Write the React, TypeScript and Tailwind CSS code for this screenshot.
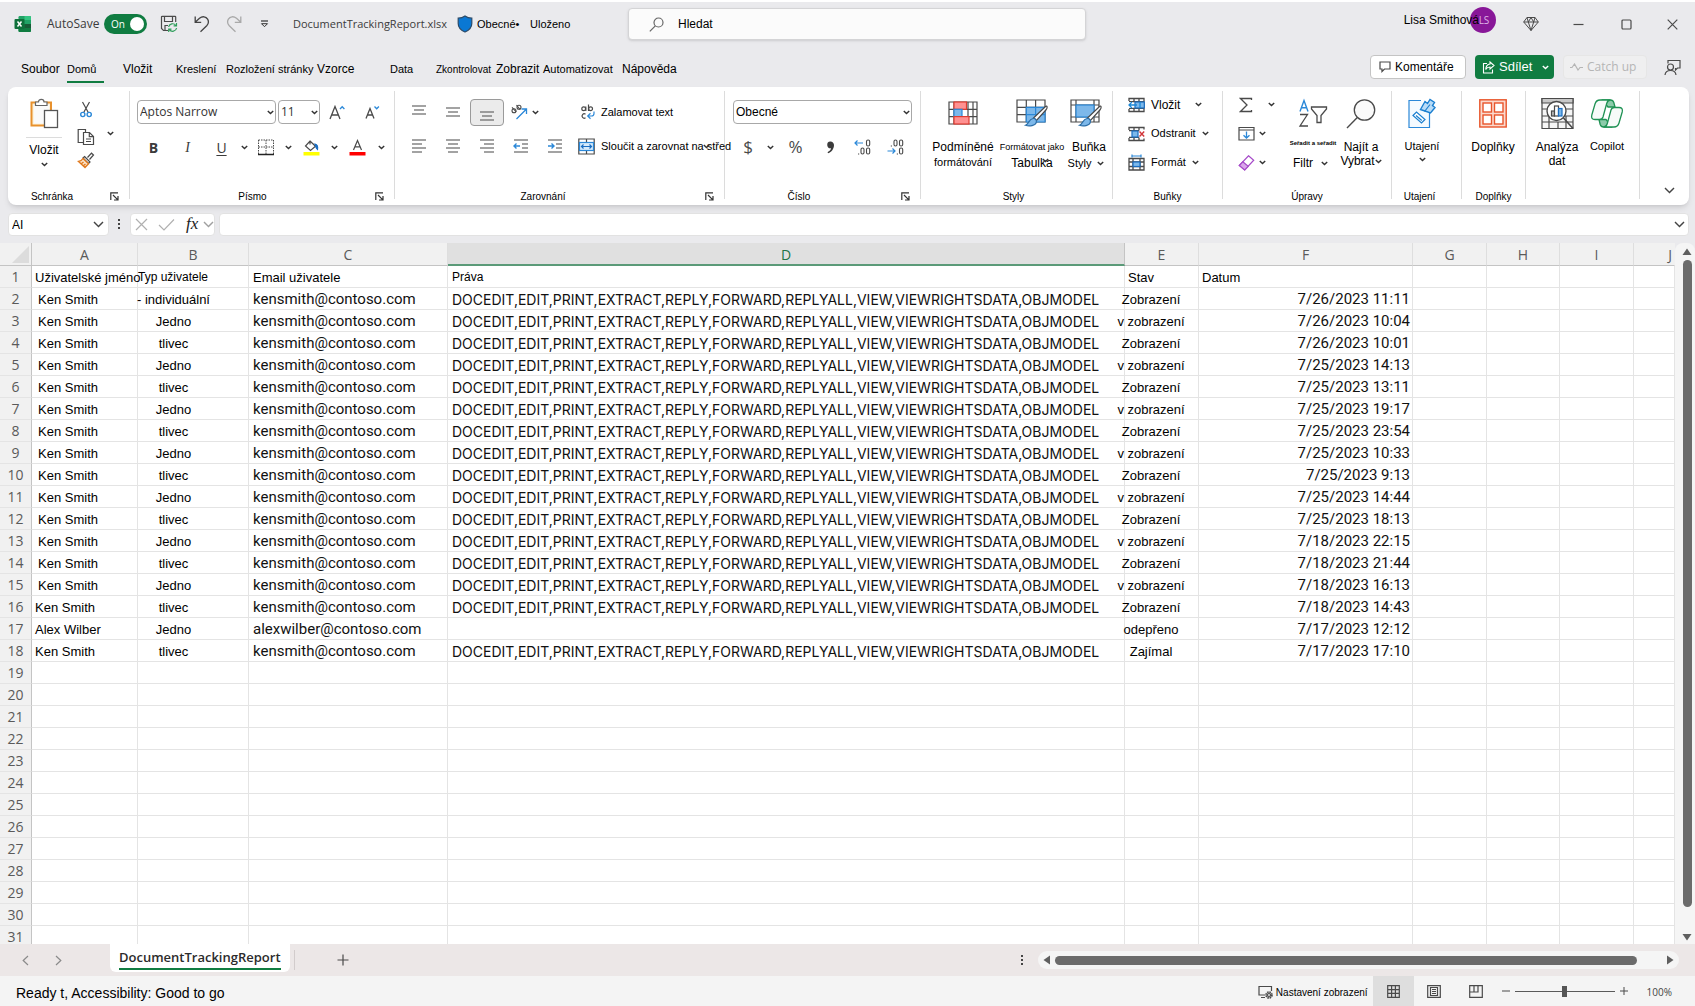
import React, { useState } from 'react';
import clsx from 'clsx';

type Row = {
  name: string;
  type: string;
  email: string;
  rights: boolean;
  status: string;
  date: string;
};

const RIGHTS = 'DOCEDIT,EDIT,PRINT,EXTRACT,REPLY,FORWARD,REPLYALL,VIEW,VIEWRIGHTSDATA,OBJMODEL';

const ken = (type: string, status: string, date: string): Row => ({
  name: 'Ken Smith',
  type,
  email: 'kensmith@contoso.com',
  rights: true,
  status,
  date,
});

const ROWS: Row[] = [
  ken('- individuální', 'Zobrazení', '7/26/2023 11:11'),
  ken('Jedno', 'v zobrazení', '7/26/2023 10:04'),
  ken('tlivec', 'Zobrazení', '7/26/2023 10:01'),
  ken('Jedno', 'v zobrazení', '7/25/2023 14:13'),
  ken('tlivec', 'Zobrazení', '7/25/2023 13:11'),
  ken('Jedno', 'v zobrazení', '7/25/2023 19:17'),
  ken('tlivec', 'Zobrazení', '7/25/2023 23:54'),
  ken('Jedno', 'v zobrazení', '7/25/2023 10:33'),
  ken('tlivec', 'Zobrazení', '7/25/2023 9:13'),
  ken('Jedno', 'v zobrazení', '7/25/2023 14:44'),
  ken('tlivec', 'Zobrazení', '7/25/2023 18:13'),
  ken('Jedno', 'v zobrazení', '7/18/2023 22:15'),
  ken('tlivec', 'Zobrazení', '7/18/2023 21:44'),
  ken('Jedno', 'v zobrazení', '7/18/2023 16:13'),
  ken('tlivec', 'Zobrazení', '7/18/2023 14:43'),
  {
    name: 'Alex Wilber',
    type: 'Jedno',
    email: 'alexwilber@contoso.com',
    rights: false,
    status: 'odepřeno',
    date: '7/17/2023 12:12',
  },
  ken('tlivec', 'Zajímal', '7/17/2023 17:10'),
];

const TABS = [
  { label: 'Soubor', className: 'w-[46px] text-[12px]' },
  { label: 'Domů', className: 'w-[56px] text-[11px]' },
  { label: 'Vložit', className: 'w-[53px] text-[12px]' },
  { label: 'Kreslení', className: 'w-[50px] text-[11px]' },
  { label: 'Rozložení stránky', className: 'w-[91px] text-[11px]' },
  { label: 'Vzorce', className: 'w-[73px] text-[12px]' },
  { label: 'Data', className: 'w-[46px] text-[11px]' },
  { label: 'Zkontrolovat', className: 'w-[60px] text-[10px]' },
  { label: 'Zobrazit', className: 'w-[47px] text-[12px]' },
  { label: 'Automatizovat', className: 'w-[79px] text-[11px]' },
  { label: 'Nápověda', className: 'text-[12px]' },
];

/* ---------- small drawing helpers ---------- */

const Svg: React.FC<{ w: number; h: number; box?: string; className?: string; children: React.ReactNode }> = ({
  w,
  h,
  box,
  className,
  children,
}) => (
  <svg
    width={w}
    height={h}
    viewBox={box ?? `0 0 ${w} ${h}`}
    fill="none"
    stroke="#4a4a4a"
    strokeWidth="1.2"
    className={clsx('shrink-0', className)}
    aria-hidden="true"
  >
    {children}
  </svg>
);

const Chevron: React.FC<{ className?: string; color?: string }> = ({ className, color = '#333' }) => (
  <Svg w={7} h={5} className={className}>
    <path d="M0.8 0.9 3.5 3.6 6.2 0.9" stroke={color} strokeWidth="1.4" />
  </Svg>
);

const BigChevron: React.FC<{ color?: string }> = ({ color = '#444' }) => (
  <Svg w={11} h={7}>
    <path d="M1 1 5.5 5.6 10 1" stroke={color} strokeWidth="1.4" />
  </Svg>
);

const Lines: React.FC<{ rows: [number, number, number][]; children?: React.ReactNode }> = ({ rows, children }) => (
  <Svg w={16} h={16}>
    {rows.map(([x1, x2, y]) => (
      <path key={y} d={`M${x1} ${y}H${x2}`} stroke="#666" />
    ))}
    {children}
  </Svg>
);

const ExcelIcon = () => (
  <Svg w={18} h={18}>
    <g stroke="none">
      <rect x="4.5" y="1" width="12.5" height="16" rx="1.2" fill="#21a366" />
      <path d="M4.5 9H17V15.8a1.2 1.2 0 0 1-1.2 1.2H5.7a1.2 1.2 0 0 1-1.2-1.2z" fill="#107c41" />
      <path d="M10.5 1H15.8A1.2 1.2 0 0 1 17 2.2V5H10.5z" fill="#33c481" />
      <path d="M10.5 9H17v4H10.5z" fill="#185c37" />
      <rect x="0.5" y="4" width="10" height="10" rx="1" fill="#0f703b" />
    </g>
    <path d="M3.5 6.5 7.5 11.5M7.5 6.5 3.5 11.5" stroke="#fff" strokeWidth="1.5" />
  </Svg>
);

const SaveIcon = () => (
  <Svg w={18} h={18}>
    <path d="M8 15.5H3.5L1.5 13.5V2A0.7 0.7 0 0 1 2.2 1.3H15A0.7 0.7 0 0 1 15.7 2V7M4.5 1.5V6.5H12.5V1.5M5 15.3V10.5H8" />
    <path d="M8.6 12A4 4 0 0 1 15.8 10.5M16.5 8V10.9H13.6M16.6 13A4 4 0 0 1 9.4 14.6M8.7 17V14.2H11.5" stroke="#2f9e5b" />
  </Svg>
);

const UndoIcon: React.FC<{ flip?: boolean }> = ({ flip }) => (
  <Svg w={16} h={18} className={flip ? '-scale-x-100' : ''}>
    <path
      d="M1.2 1.5V7.3H7.2M1.4 7 5.5 3.3C8.5 0.8 12 1.5 13.6 4.2 15 6.6 14.3 9 12.7 10.7L6.5 16.7"
      stroke={flip ? '#a9a9a9' : '#444'}
      strokeWidth="1.3"
    />
  </Svg>
);

const ShieldIcon = () => (
  <Svg w={16} h={18}>
    <path
      d="M8 1C10 2.6 12.2 3.2 14.8 3.2V8.5C14.8 12.5 12 15.3 8 17 4 15.3 1.2 12.5 1.2 8.5V3.2C3.8 3.2 6 2.6 8 1Z"
      fill="#0a78d4"
      stroke="#2b4a68"
    />
  </Svg>
);

const DiamondIcon = () => (
  <Svg w={16} h={16}>
    <path d="M4 1.5H12L15.3 6 8 14.5 0.7 6ZM0.7 6H15.3M5.3 6 8 14.5 10.7 6 8 1.5ZM4 1.5 5.3 6M12 1.5 10.7 6" strokeWidth="1" />
  </Svg>
);

const PasteIcon = () => (
  <Svg w={30} h={32}>
    <rect x="2.5" y="5.5" width="19.5" height="23" stroke="#e8912d" strokeWidth="2" fill="#fdf3dc" />
    <rect x="5" y="8" width="15" height="18.5" fill="#fafafa" stroke="none" />
    <path d="M6.5 8.5V5H9.5C9.5 1.5 15 1.5 15 5H18V8.5Z" fill="#fff" stroke="#666" />
    <rect x="15.5" y="13.5" width="13" height="17" fill="#fff" stroke="#555" strokeWidth="1.3" />
  </Svg>
);

const CutIcon = () => (
  <Svg w={14} h={17}>
    <path d="M3.5 1 9.3 11.5M10.5 1 4.7 11.5" />
    <circle cx="3.8" cy="13.5" r="2.1" stroke="#2b88d8" strokeWidth="1.4" />
    <circle cx="10.2" cy="13.5" r="2.1" stroke="#2b88d8" strokeWidth="1.4" />
  </Svg>
);

const CopyIcon = () => (
  <Svg w={18} h={18}>
    <path d="M6 14.5H1.2V1.5H8.5V4" />
    <path d="M6.5 4.5H12.5L16.5 8.5V16.5H6.5ZM12.3 4.7V8.7H16.3M9 11H14M9 13.5H14" fill="#fff" />
  </Svg>
);

const PainterIcon = () => (
  <Svg w={18} h={17}>
    <path d="M10.5 5.5 14.5 1.2 16.5 3 12.5 7.5" fill="#fff" />
    <path d="M7.5 4.5 13 10 11.5 11.5 6 6Z" fill="#fff" />
    <path d="M6 6.5 11.5 11.8 8 15.5 1.5 9.5Q4.5 9 6 6.5ZM4 12 6.5 10M6 14 8.5 12" stroke="#e07a1f" fill="#fbe3c8" strokeWidth="1.4" />
  </Svg>
);

const BordersIcon = () => (
  <Svg w={16} h={17}>
    <path d="M0.5 1H15.5M0.5 1V15M15.5 1V15M8 1V15M0.5 8H15.5" strokeDasharray="1.5 1" strokeWidth="1" />
    <path d="M0 15.5H16" stroke="#222" strokeWidth="1.5" />
  </Svg>
);

const FillIcon = () => (
  <Svg w={17} h={17}>
    <path d="M7 2 12.5 7.3 7.5 11.5 2.5 7Z M7 2V5.5" />
    <path d="M12 5C14.8 5.5 15 7.5 14.5 10.5 13 9.5 12.7 8 12 5Z" fill="#1b6ec2" stroke="#1b6ec2" />
    <rect x="0.5" y="13" width="16" height="3.5" fill="#ffff00" stroke="none" />
  </Svg>
);

const LauncherIcon = () => (
  <Svg w={9} h={9}>
    <path d="M0.8 8V0.8H8M3 3 7.6 7.6M8 4V8H4" stroke="#333" />
  </Svg>
);

const OrientationIcon = () => (
  <Svg w={18} h={16}>
    <circle cx="4" cy="6.7" r="2" strokeWidth="1.1" />
    <path d="M2 3.3 6.3 7.8M6.5 1 10 5.5" strokeWidth="1.1" />
    <circle cx="9" cy="3.2" r="2" strokeWidth="1.1" />
    <path d="M6.5 15 16 5.5M11.5 5H16.5V10" stroke="#2b88d8" strokeWidth="1.3" />
  </Svg>
);

const WrapIcon = () => (
  <Svg w={16} h={16}>
    <circle cx="3.7" cy="4.8" r="1.9" />
    <path d="M5.8 2.5V7M8.5 0.5V7" />
    <circle cx="10.6" cy="4.8" r="1.9" />
    <path d="M5.5 10.2A2.2 2.2 0 1 0 5.5 13.8" />
    <path d="M14 7.5V9.5Q14 12 11.5 12H8M10.5 9.3 7.7 12 10.5 14.7" stroke="#2b88d8" />
  </Svg>
);

const MergeIcon = () => (
  <Svg w={17} h={17}>
    <path d="M0.8 1H16.2V16H0.8ZM8.5 1V4M8.5 13V16" />
    <rect x="1.5" y="4.5" width="14" height="8" fill="#d6ebfb" stroke="#2b88d8" />
    <path d="M3.5 8.5H13.5M5.5 6.5 3.5 8.5 5.5 10.5M11.5 6.5 13.5 8.5 11.5 10.5" stroke="#1b6ec2" />
  </Svg>
);

const DecimalIcon: React.FC<{ less?: boolean }> = ({ less }) => (
  <Svg w={18} h={18}>
    {less ? (
      <path d="M0.5 13H8M5.5 10.5 8 13 5.5 15.5" stroke="#2b88d8" />
    ) : (
      <path d="M9 5H1M3.5 2.5 1 5 3.5 7.5" stroke="#2b88d8" />
    )}
    <g strokeWidth="1.1">
      {less && <rect x="7" y="2" width="3" height="6" rx="1.5" />}
      <rect x="12.5" y="2" width="3.2" height="6" rx="1.5" />
      {!less && <rect x="7" y="10" width="3" height="6" rx="1.5" />}
      <rect x="12.5" y="10" width="3.2" height="6" rx="1.5" />
      <path d={less ? 'M3.8 8H5M9.8 16H11' : 'M4 16H5.2'} />
    </g>
  </Svg>
);

const CondFormatIcon = () => (
  <Svg w={30} h={26}>
    <path d="M1 2H29V24H1ZM1 9.3H29M1 16.6H29M6 2V24M20 2V24M25 2V24" />
    <rect x="6" y="2" width="12.5" height="7.3" fill="#ff9191" stroke="#e03c31" />
    <rect x="6" y="9.3" width="8" height="7.3" fill="#7db8ea" stroke="#2b88d8" />
    <rect x="6" y="16.6" width="15" height="7.4" fill="#ff9191" stroke="#e03c31" />
  </Svg>
);

const Brush = () => (
  <>
    <path d="M29.5 8.5C31.5 7 31.5 10 30.3 11.5L20.5 22.5 17.5 20Z" fill="#fff" />
    <path d="M17 20.5C19 20 21 22 20.3 24.3 19.5 27.5 13.5 28.8 9.5 27.3 13 26 12.5 21.5 17 20.5Z" fill="#7db8ea" stroke="#2b6ea8" />
  </>
);

const TableFormatIcon = () => (
  <Svg w={32} h={30}>
    <path d="M1 2H29V24H1ZM1 9.3H29M1 16.6H29M10.3 2V24M19.6 2V24" fill="#fff" />
    <path d="M10.3 9.3H29V24H10.3Z" fill="#7db8ea" stroke="#2b88d8" />
    <path d="M10.3 16.6H29M19.6 9.3V24" stroke="#2b88d8" />
    <Brush />
  </Svg>
);

const CellStylesIcon = () => (
  <Svg w={32} h={30}>
    <path d="M1 2H29V24H1ZM1 7H29M1 19H29M6 2V24M24 2V24" fill="#fff" />
    <rect x="6" y="7" width="18" height="12" fill="#7db8ea" stroke="#2b88d8" />
    <Brush />
  </Svg>
);

const CellsInsertIcon = () => (
  <Svg w={17} h={16}>
    <path d="M1 4V1.5H16V14.5H1V12M6 1.5V14.5M11 1.5V14.5M1 4.7H16M1 11.3H16" strokeWidth="1.3" />
    <rect x="0" y="5.4" width="7" height="5.2" fill="#fff" stroke="none" />
    <rect x="7" y="5" width="9.3" height="6" fill="#7db8ea" stroke="#1b6ec2" />
    <path d="M12 5V11M9 8H1M4 5 1 8 4 11" stroke="#1b88d8" strokeWidth="1.3" />
  </Svg>
);

const CellsDeleteIcon = () => (
  <Svg w={17} h={16}>
    <path d="M1 4V1.5H16V3.5M1 12V14.5H16V12.5M6 1.5V4.5M11 1.5V4.5M6 11.5V14.5M11 11.5V14.5M1 4.7H11M1 11.3H11" strokeWidth="1.3" />
    <rect x="4" y="5" width="6" height="6" fill="#7db8ea" stroke="#1b6ec2" />
    <path d="M11.5 5.5 16.2 10.5M16.2 5.5 11.5 10.5" stroke="#d13438" strokeWidth="1.4" />
  </Svg>
);

const CellsFormatIcon = () => (
  <Svg w={17} h={17}>
    <path d="M4 2H13M4 0.5V3.5M13 0.5V3.5" stroke="#2b88d8" />
    <path d="M1 4.5H16V16H1ZM1 8H16M1 12.5H16M5 4.5V16M12 4.5V16" strokeWidth="1.3" />
    <rect x="5" y="8" width="7" height="4.5" fill="#7db8ea" stroke="#1b6ec2" />
  </Svg>
);

const SigmaIcon = () => (
  <Svg w={14} h={16}>
    <path d="M12.5 3V1.5H1.5L8 8 1.5 14.5H12.5V13" strokeWidth="1.3" />
  </Svg>
);

const FillDownIcon = () => (
  <Svg w={17} h={15}>
    <path d="M1 1.5H16V14H1ZM1 4H16" fill="#fff" />
    <path d="M8.5 5.5V12M5.5 9.2 8.5 12 11.5 9.2" stroke="#2b88d8" strokeWidth="1.3" />
  </Svg>
);

const EraserIcon = () => (
  <Svg w={17} h={16}>
    <path d="M10.5 0.8 15.7 5.2 6.7 15 1.3 10.5Z" fill="#fff" stroke="#a64ac9" />
    <path d="M4.8 6.8 10.2 11.3 6.7 15 1.3 10.5Z" fill="#d9a6ea" stroke="#a64ac9" />
  </Svg>
);

const SortFilterIcon = () => (
  <Svg w={30} h={30}>
    <path d="M2 13.5 6 2.5 10 13.5M3.5 9.7H8.5" stroke="#2b88d8" strokeWidth="1.4" />
    <path d="M2 16.5H9.5L2 28H10" strokeWidth="1.3" />
    <path d="M13.5 9H28.5V11L23 17.5V24.5H19V17.5L13.5 11Z" strokeWidth="1.3" />
  </Svg>
);

const FindIcon = () => (
  <Svg w={30} h={31}>
    <circle cx="18.5" cy="12" r="10.2" strokeWidth="1.3" fill="#fafafa" />
    <path d="M11.3 19.5 1 30" strokeWidth="1.4" />
  </Svg>
);

const SensitivityIcon = () => (
  <Svg w={28} h={31}>
    <path d="M13 2.5H1V29.5H21.5V14" stroke="#2b88d8" fill="#f4faff" />
    <path d="M5 17.5 8.5 14 17 21.5 13.5 25Z" fill="#fff" stroke="#1b7fd0" />
    <path d="M8 17.5 13.8 22.5" stroke="#1b7fd0" />
    <path d="M12.5 11.5 17 3.5 19.5 5.5 22 1.5 26.5 4.5 24.5 7.5 27 9.5 22.5 15Z" fill="#b9dcf7" stroke="#1b7fd0" strokeWidth="1.4" />
    <path d="M16.500 13.500 22 6.500" stroke="#1b7fd0" />
  </Svg>
);

const AddinsIcon = () => (
  <Svg w={28} h={29}>
    <g stroke="#e8542b" strokeWidth="1.4">
      <rect x="0.8" y="0.8" width="26.4" height="27.2" fill="#fbd9cd" />
      <rect x="4" y="4" width="8.5" height="9" fill="#fff" />
      <rect x="15.5" y="4" width="8.5" height="9" fill="#fff" />
      <rect x="4" y="16" width="8.5" height="9" fill="#fff" />
      <rect x="15.5" y="16" width="8.5" height="9" fill="#fff" />
    </g>
  </Svg>
);

const AnalyzeIcon = () => (
  <Svg w={33} h={33}>
    <path d="M1 1.5H32V31.5H1ZM1 12H32M1 19H32M1 25H32M8 19V31.5M17 25V31.5M25 19V31.5" fill="#f6f6f6" />
    <path d="M1 1.5H32V6H1Z" fill="#c8c8c8" />
    <circle cx="15.5" cy="14" r="9.5" fill="#fff" strokeWidth="1.4" />
    <path d="M22.5 21 32 31.5" strokeWidth="1.6" />
    <rect x="10.5" y="14" width="3" height="5" fill="#bbb" />
    <rect x="13.5" y="9" width="4" height="10" fill="#fff" />
    <rect x="17.5" y="11.5" width="3.5" height="7.5" fill="#7db8ea" stroke="#1b6ec2" />
  </Svg>
);

const CopilotIcon = () => (
  <Svg w={34} h={31}>
    <g stroke="#1f9254" strokeWidth="1.3" strokeLinejoin="round">
      <path d="M12 2H20.5Q23 2 23.8 4.5L25 9H18Z" fill="#8ccbaa" />
      <path d="M22 29H13.5Q11 29 10.2 26.5L9 21.5H16Z" fill="#8ccbaa" />
      <path d="M12.5 2H20Q17.5 2.5 16.7 5.5L13 19Q12.2 21.5 9.5 21.5H5Q0.7 21.5 1.8 17L5 6Q6.2 2 10 2Z" fill="#f7fbf9" />
      <path d="M21.5 29H14Q16.5 28.5 17.3 25.5L21 12Q21.8 9.5 24.5 9.5H29Q33.3 9.5 32.2 14L29 25Q27.8 29 24 29Z" fill="#f7fbf9" />
    </g>
  </Svg>
);

/* ---------- title bar ---------- */

const TitleBar = () => (
  <header className="flex h-[44px] items-center">
    <div className="flex w-[628px] shrink-0 items-center pl-[14px]">
      <ExcelIcon />
      <label htmlFor="autosave" className="ml-[15px] w-[57px] font-['Open_Sans',sans-serif] text-[12px] text-[#3b3b3b]">
        AutoSave
      </label>
      <span className="relative flex h-[20px] w-[43px] items-center rounded-full bg-[#107c41]">
        <input id="autosave" type="checkbox" defaultChecked className="absolute inset-0 appearance-none" />
        <span className="pointer-events-none ml-[7px] font-['Open_Sans',sans-serif] text-[10px] text-white">On</span>
        <span className="pointer-events-none mr-[3px] ml-auto size-[14px] rounded-full bg-white" />
      </span>
      <div className="ml-[13px] flex items-center gap-[16px]">
        <button aria-label="Uložit"><SaveIcon /></button>
        <button aria-label="Zpět"><UndoIcon /></button>
        <button aria-label="Znovu"><UndoIcon flip /></button>
        <button aria-label="Přizpůsobit panel" className="pl-[2px]">
          <Svg w={9} h={8}>
            <path d="M1 1H8" stroke="#333" />
            <path d="M1.5 3.7H7.5L4.5 6.7Z" stroke="#333" strokeWidth="1" />
          </Svg>
        </button>
      </div>
      <span className="ml-[24px] w-[164px] font-['Open_Sans',sans-serif] text-[11px] text-[#3b3b3b]">
        DocumentTrackingReport.xlsx
      </span>
      <ShieldIcon />
      <span className="ml-[4px] w-[53px] text-[11px]">Obecné•</span>
      <span className="text-[11px]">Uloženo</span>
    </div>

    <label className="flex h-[32px] max-w-[458px] flex-1 items-center gap-[14px] rounded border border-[#d4d4d6] bg-[#fbfbfb] pl-[20px] shadow-sm">
      <Svg w={15} h={15}>
        <circle cx="9.5" cy="5.5" r="4.5" stroke="#666" />
        <path d="M6.3 8.8 0.8 14.3" stroke="#666" />
      </Svg>
      <input aria-label="Hledat" placeholder="Hledat" className="min-w-0 flex-1 bg-transparent text-[12px] outline-none placeholder:text-black" />
    </label>

    <div className="ml-auto flex items-center">
      <div className="mr-[12px] flex items-center pb-[8px]">
        <span className="relative z-10 text-[12px] whitespace-nowrap">Lisa Smithová</span>
        <span className="-ml-[9px] flex size-[26px] items-center justify-center rounded-full bg-[#881798] pl-[2px] font-['Open_Sans',sans-serif] text-[10px] text-[#dfb3e6]">
          LS
        </span>
      </div>
      <button aria-label="Premium" className="flex w-[46px] justify-center"><DiamondIcon /></button>
      <button aria-label="Minimalizovat" className="flex w-[48px] justify-center">
        <Svg w={11} h={11}><path d="M0.5 5.5H10.5" /></Svg>
      </button>
      <button aria-label="Maximalizovat" className="flex w-[48px] justify-center">
        <Svg w={11} h={11}><rect x="1" y="1" width="9" height="9" rx="1" /></Svg>
      </button>
      <button aria-label="Zavřít" className="flex w-[45px] justify-center">
        <Svg w={11} h={11}><path d="M0.7 0.7 10.3 10.3M10.3 0.7 0.7 10.3" /></Svg>
      </button>
    </div>
  </header>
);

const TabRow = () => {
  const [active, setActive] = useState('Domů');
  return (
    <div className="flex h-[41px] items-center justify-between pr-[14px] pl-[21px]">
      <nav className="flex self-end pb-[4px]">
        {TABS.map((tab) => (
          <button
            key={tab.label}
            onClick={() => setActive(tab.label)}
            className={clsx('h-[28px] text-left whitespace-nowrap', tab.className)}
          >
            <span
              className={clsx(
                'flex h-[28px] items-center border-b-2 pt-[2px]',
                tab.label === active ? 'w-[37px] border-[#107c41]' : 'border-transparent'
              )}
            >
              {tab.label}
            </span>
          </button>
        ))}
      </nav>
      <div className="flex items-center gap-[9px] pt-[1px]">
        <button className="flex h-[24px] w-[96px] items-center gap-[4px] rounded border border-[#c4c4c4] bg-white pl-[8px] text-[12px]">
          <Svg w={12} h={12}>
            <path d="M1 1H11V8H5.5L3 10.5V8H1Z" />
          </Svg>
          Komentáře
        </button>
        <button className="flex h-[24px] w-[79px] items-center gap-[4px] rounded bg-[#107c41] pl-[7px] text-[13px] text-white">
          <Svg w={13} h={13}>
            <path d="M5 2.5H1.5V12H10.5V8.5M8 1 12 4.5 8 8V6Q5 6 3.7 8.5 4 3.5 8 3Z" stroke="#fff" strokeWidth="1.1" />
          </Svg>
          Sdílet
          <Chevron color="#fff" className="ml-[6px]" />
        </button>
        <button className="flex h-[24px] w-[84px] items-center gap-[4px] rounded border border-[#e6e6e6] bg-[#efeff0] pl-[6px] font-['Open_Sans',sans-serif] text-[12px] text-[#b5b5b5]">
          <Svg w={13} h={8}>
            <path d="M0 4.5H2L4.5 1 8 7 10 4.5H13" stroke="#b5b5b5" />
          </Svg>
          Catch up
        </button>
        <button aria-label="Prezentovat" className="pl-[8px]">
          <Svg w={17} h={17}>
            <path d="M4 4.5V1.5H16V9H13.5L11.5 11V9" />
            <circle cx="6.5" cy="8" r="3" />
            <path d="M1 16Q1.5 11.5 6.5 11.5 11.5 11.5 12 16" />
          </Svg>
        </button>
      </div>
    </div>
  );
};

/* ---------- ribbon ---------- */

const Group: React.FC<{
  label?: string;
  launcher?: boolean;
  className: string;
  labelClass?: string;
  children: React.ReactNode;
}> = ({ label, launcher, className, labelClass, children }) => (
  <>
    <section className={clsx('flex shrink-0 flex-col', className)}>
      <div className="flex-1">{children}</div>
      <div className="flex h-[18px] items-center pr-[10px]">
        <span className={clsx('flex-1 text-center text-[10px]', labelClass, !launcher && 'pl-[10px]')}>{label}</span>
        {launcher && <button aria-label={`Další: ${label}`}><LauncherIcon /></button>}
      </div>
    </section>
    <div className="mt-[4px] mb-[6px] w-px shrink-0 bg-[#dcdcdc]" />
  </>
);

const Tool: React.FC<{ label: string; className: string; children: React.ReactNode }> = ({ label, className, children }) => (
  <button aria-label={label} className={clsx('flex h-[24px] items-center justify-center', className)}>
    {children}
  </button>
);

const BigTool: React.FC<{ icon: React.ReactNode; className: string; children: React.ReactNode }> = ({
  icon,
  className,
  children,
}) => (
  <button className={clsx('flex flex-col items-center pt-[10px] leading-[15px] whitespace-nowrap', className)}>
    <span className="mb-[11px] flex h-[32px] items-center justify-center">{icon}</span>
    {children}
  </button>
);

const Picker: React.FC<{ label: string; value: string; className: string }> = ({ label, value, className }) => (
  <span className={clsx('relative inline-flex h-[24px] items-center', className)}>
    <select
      aria-label={label}
      className="h-[24px] w-full appearance-none rounded border border-[#a8a8a8] bg-white pl-[2px]"
      defaultValue={value}
    >
      <option>{value}</option>
    </select>
    <Chevron className="pointer-events-none absolute right-[2px]" />
  </span>
);

const Ribbon = () => (
  <div className="mr-[6px] ml-[8px] flex h-[118px] shrink-0 rounded-lg bg-white shadow-md">
    <Group label="Schránka" launcher className="w-[121px]" labelClass="pr-[14px]">
      <div className="flex pl-[18px]">
        <button className="flex w-[36px] flex-col items-center pt-[10px]">
          <PasteIcon />
          <span className="mt-[8px] mb-[4px] h-px w-full bg-[#dcdcdc]" />
          <span className="text-[12px] leading-[16px]">Vložit</span>
          <Chevron className="mt-[4px]" />
        </button>
        <div className="ml-[14px] flex w-[20px] flex-col items-center pt-[9px]">
          <button aria-label="Vyjmout" className="h-[27px]"><CutIcon /></button>
          <button aria-label="Kopírovat" className="h-[28px]"><CopyIcon /></button>
          <button aria-label="Kopírovat formát" className="h-[18px]"><PainterIcon /></button>
        </div>
        <button aria-label="Možnosti kopírování" className="ml-[11px] flex h-[92px] items-center">
          <Chevron />
        </button>
      </div>
    </Group>

    <Group label="Písmo" launcher className="w-[264px]">
      <div className="flex flex-col gap-[11px] pt-[13px] pl-[7px]">
        <div className="flex items-center">
          <Picker label="Písmo" value="Aptos Narrow" className="mr-[2px] w-[139px] font-['Open_Sans',sans-serif] text-[12px] text-[#333]" />
          <Picker label="Velikost písma" value="11" className="w-[42px] font-['Open_Sans',sans-serif] text-[12px] text-[#333]" />
          <Tool label="Zvětšit písmo" className="w-[35px]">
            <Svg w={17} h={15}>
              <path d="M1 14 6 1.5 11 14M2.8 10H9.2" strokeWidth="1.3" />
              <path d="M11 4 13.2 1.7 15.4 4" stroke="#2b88d8" strokeWidth="1.3" />
            </Svg>
          </Tool>
          <Tool label="Zmenšit písmo" className="w-[34px]">
            <Svg w={15} h={15}>
              <path d="M1 13.5 5 3.5 9 13.5M2.5 10H7.5" strokeWidth="1.3" />
              <path d="M9.5 1.5 11.7 3.8 13.9 1.5" stroke="#2b88d8" strokeWidth="1.3" />
            </Svg>
          </Tool>
        </div>
        <div className="flex items-center font-['Open_Sans',sans-serif] text-[14px] text-[#3b3b3b]">
          <Tool label="Tučné" className="w-[33px] font-bold">B</Tool>
          <Tool label="Kurzíva" className="w-[35px] font-['Liberation_Serif',serif] italic">I</Tool>
          <Tool label="Podtržené" className="w-[33px] underline underline-offset-2">U</Tool>
          <Tool label="Možnosti podtržení" className="w-[12px]"><Chevron /></Tool>
          <Tool label="Ohraničení" className="w-[32px]"><BordersIcon /></Tool>
          <Tool label="Možnosti ohraničení" className="w-[12px]"><Chevron /></Tool>
          <Tool label="Barva výplně" className="w-[34px]"><FillIcon /></Tool>
          <Tool label="Možnosti výplně" className="w-[12px]"><Chevron /></Tool>
          <Tool label="Barva písma" className="w-[35px]">
            <Svg w={17} h={17}>
              <path d="M4.5 11 8.5 1.5 12.5 11M6 7.8H11" />
              <rect x="0.5" y="13" width="16" height="3.5" fill="#ff0000" stroke="none" />
            </Svg>
          </Tool>
          <Tool label="Možnosti barvy" className="w-[12px]"><Chevron /></Tool>
        </div>
      </div>
    </Group>

    <Group label="Zarovnání" launcher className="w-[329px]" labelClass="pr-[14px]">
      <div className="flex pt-[12px] pl-[7px]">
        <div className="flex w-[177px] flex-col gap-[9px]">
          <div className="flex h-[26px] items-center">
            <Tool label="Nahoru" className="w-[34px]">
              <Lines rows={[[1, 15, 2], [3, 13, 6], [1, 15, 10]]} />
            </Tool>
            <Tool label="Na střed svisle" className="w-[34px]">
              <Lines rows={[[1, 15, 4], [3, 13, 8], [1, 15, 12]]} />
            </Tool>
            <button aria-label="Dolů" className="flex h-[27px] w-[34px] items-center justify-center rounded border border-[#9a9a9a] bg-[#ebebeb] pt-[6px]">
              <Lines rows={[[1, 15, 5], [3, 13, 9], [1, 15, 13]]} />
            </button>
            <Tool label="Orientace" className="w-[41px] gap-[4px]">
              <OrientationIcon />
              <Chevron />
            </Tool>
          </div>
          <div className="flex items-center">
            <Tool label="Vlevo" className="w-[34px]">
              <Lines rows={[[1, 15, 2], [1, 11, 6], [1, 15, 10], [1, 11, 14]]} />
            </Tool>
            <Tool label="Na střed" className="w-[34px]">
              <Lines rows={[[1, 15, 2], [3, 13, 6], [1, 15, 10], [3, 13, 14]]} />
            </Tool>
            <Tool label="Vpravo" className="w-[34px]">
              <Lines rows={[[1, 15, 2], [5, 15, 6], [1, 15, 10], [5, 15, 14]]} />
            </Tool>
            <Tool label="Zmenšit odsazení" className="w-[34px]">
              <Lines rows={[[1, 15, 2], [9, 15, 6], [9, 15, 10], [1, 15, 14]]}>
                <path d="M7 8H1M3.5 5.5 1 8 3.5 10.5" stroke="#2b88d8" strokeWidth="1.4" />
              </Lines>
            </Tool>
            <Tool label="Zvětšit odsazení" className="w-[34px]">
              <Lines rows={[[1, 15, 2], [9, 15, 6], [9, 15, 10], [1, 15, 14]]}>
                <path d="M1 8H7M4.5 5.5 7 8 4.5 10.5" stroke="#2b88d8" strokeWidth="1.4" />
              </Lines>
            </Tool>
          </div>
        </div>
        <div className="flex flex-col gap-[9px] pl-[6px] text-[11px] whitespace-nowrap">
          <button className="flex h-[26px] items-center gap-[5px] pl-[2px]">
            <WrapIcon /> Zalamovat text
          </button>
          <button className="relative z-10 flex h-[24px] items-center gap-[6px]">
            <MergeIcon /> Sloučit a zarovnat na střed
            <Chevron className="absolute left-[125px]" />
          </button>
        </div>
      </div>
    </Group>

    <Group label="Číslo" launcher className="w-[195px]" labelClass="pr-[28px]">
      <div className="flex flex-col gap-[11px] pt-[13px] pl-[8px]">
        <Picker label="Formát čísla" value="Obecné" className="w-[179px] text-[12px]" />
        <div className="flex items-center font-['Open_Sans',sans-serif] text-[17px] text-[#4a4a4a]">
          <Tool label="Měna" className="w-[30px]">$</Tool>
          <Tool label="Možnosti měny" className="w-[15px]"><Chevron /></Tool>
          <Tool label="Procenta" className="w-[35px]">%</Tool>
          <Tool label="Oddělovač tisíců" className="w-[35px]">
            <Svg w={9} h={13}>
              <path d="M4.3 0.5A3.5 3.5 0 0 1 8 4C8 8 5.5 11 2.2 12.2L1.5 11.2C3.5 10.2 4.8 9 5 7.3A3.3 3.3 0 1 1 4.3 0.5Z" fill="#3b3b3b" stroke="none" />
            </Svg>
          </Tool>
          <Tool label="Přidat desetinné místo" className="w-[30px]"><DecimalIcon /></Tool>
          <Tool label="Odebrat desetinné místo" className="w-[36px]"><DecimalIcon less /></Tool>
        </div>
      </div>
    </Group>

    <Group label="Styly" className="w-[191px]" labelClass="pr-[6px]">
      <div className="flex pl-[7px]">
        <BigTool icon={<CondFormatIcon />} className="w-[70px]">
          <span className="text-[12px]">Podmíněné</span>
          <span className="text-[11px]">formátování</span>
        </BigTool>
        <BigTool icon={<TableFormatIcon />} className="w-[68px]">
          <span className="text-[9px]">Formátovat jako</span>
          <span className="relative pt-[1px] text-[12px]">
            Tabulka
            <Chevron className="absolute top-[3px] right-[4px]" />
          </span>
        </BigTool>
        <BigTool icon={<CellStylesIcon />} className="w-[40px]">
          <span className="pl-[6px] text-[12px]">Buňka</span>
          <span className="flex items-center gap-[6px] pt-[1px] text-[11px]">
            Styly <Chevron />
          </span>
        </BigTool>
      </div>
    </Group>

    <Group label="Buňky" className="w-[109px]">
      <div className="flex flex-col pt-[3px] pl-[15px] text-[11px]">
        <button className="flex h-[29px] items-center gap-[6px]">
          <CellsInsertIcon />
          <span className="w-[38px] text-left text-[12px]">Vložit</span>
          <Chevron />
        </button>
        <button className="flex h-[29px] items-center gap-[6px]">
          <CellsDeleteIcon /> Odstranit <Chevron />
        </button>
        <button className="flex h-[29px] items-center gap-[6px]">
          <CellsFormatIcon /> Formát <Chevron />
        </button>
      </div>
    </Group>

    <Group label="Úpravy" className="w-[168px]">
      <div className="flex pl-[15px]">
        <div className="flex w-[52px] flex-col pt-[3px]">
          <button aria-label="Automatické shrnutí" className="flex h-[29px] items-center gap-[15px] pl-[1px]">
            <SigmaIcon /> <Chevron />
          </button>
          <button aria-label="Vyplnit" className="flex h-[29px] items-center gap-[4px]">
            <FillDownIcon /> <Chevron />
          </button>
          <button aria-label="Vymazat" className="flex h-[29px] items-center gap-[4px]">
            <EraserIcon /> <Chevron />
          </button>
        </div>
        <BigTool icon={<SortFilterIcon />} className="w-[46px]">
          <span className="h-[16px] text-[6px] leading-[6px] font-bold">Seřadit a seřadit</span>
          <span className="flex w-full items-center gap-[8px] pl-[3px] text-[12px]">
            Filtr <Chevron />
          </span>
        </BigTool>
        <BigTool icon={<FindIcon />} className="w-[50px]">
          <span className="text-[12px]">Najít a</span>
          <span className="flex items-center text-[12px] leading-[13px]">
            Vybrat <Chevron />
          </span>
        </BigTool>
      </div>
    </Group>

    <Group label="Utajení" className="w-[69px]" labelClass="pr-[14px]">
      <BigTool icon={<SensitivityIcon />} className="w-[60px]">
        <span className="text-[11px] leading-[13px]">Utajení</span>
        <Chevron className="mt-[4px]" />
      </BigTool>
    </Group>

    <Group label="Doplňky" className="w-[63px]">
      <BigTool icon={<AddinsIcon />} className="w-[62px]">
        <span className="text-[12px]">Doplňky</span>
      </BigTool>
    </Group>

    <Group className="w-[113px]">
      <div className="flex pl-[7px]">
        <BigTool icon={<AnalyzeIcon />} className="w-[48px]">
          <span className="text-[12px]">Analýza</span>
          <span className="text-[12px] leading-[13px]">dat</span>
        </BigTool>
        <BigTool icon={<CopilotIcon />} className="w-[52px]">
          <span className="text-[11px] leading-[13px]">Copilot</span>
        </BigTool>
      </div>
    </Group>

    <button aria-label="Sbalit pás karet" className="mb-[11px] ml-auto mr-[14px] self-end">
      <BigChevron />
    </button>
  </div>
);

/* ---------- formula bar ---------- */

const FormulaBar = () => (
  <div className="flex h-[38px] shrink-0 items-center pr-[6px] pl-[8px]">
    <label className="flex h-[23px] w-[101px] items-center rounded border border-[#e2e2e2] bg-white pr-[4px] pl-[3px]">
      <input aria-label="Pole názvů" defaultValue="AI" className="min-w-0 flex-1 pt-[2px] text-[12px] outline-none" />
      <BigChevron />
    </label>
    <Svg w={21} h={12}>
      <g fill="#444" stroke="none">
        <rect x="9" y="1" width="2" height="2" />
        <rect x="9" y="5" width="2" height="2" />
        <rect x="9" y="9" width="2" height="2" />
      </g>
    </Svg>
    <div className="flex h-[23px] w-[85px] items-center rounded border border-[#e2e2e2] bg-white pl-[4px]">
      <button aria-label="Zrušit">
        <Svg w={13} h={13}><path d="M1 1 12 12M12 1 1 12" stroke="#b0b0b0" /></Svg>
      </button>
      <button aria-label="Zadat" className="ml-[10px]">
        <Svg w={17} h={13}><path d="M1 7 6 12 16 1.5" stroke="#b0b0b0" /></Svg>
      </button>
      <button aria-label="Vložit funkci" className="ml-[11px] font-['Liberation_Serif',serif] text-[17px] leading-[18px] text-[#222] italic">
        fx
      </button>
      <span className="ml-[5px]"><BigChevron color="#a0a0a0" /></span>
    </div>
    <label className="ml-[4px] flex h-[23px] flex-1 items-center rounded border border-[#e2e2e2] bg-white pr-[3px] pl-[4px]">
      <input aria-label="Řádek vzorců" className="min-w-0 flex-1 text-[12px] outline-none" />
      <BigChevron />
    </label>
  </div>
);

/* ---------- sheet ---------- */

const CELL = 'h-[22px] border-r border-b border-[#e4e4e4] px-0 pt-[2px] pb-0 whitespace-nowrap';

const RowNumber: React.FC<{ n: number }> = ({ n }) => (
  <th className="h-[22px] border-r border-b border-r-[#c4c4c4] border-b-[#e4e4e4] bg-[#f1f1f1] px-0 pt-px pb-0 text-center font-['Open_Sans',sans-serif] text-[14px] leading-[20px] font-normal text-[#5a5a5a]">
    {n}
  </th>
);

const Sheet = () => (
  <div className="flex min-h-0 flex-1">
    <div className="min-w-0 flex-1 overflow-hidden bg-white">
      <table className="w-full table-fixed border-separate border-spacing-0 text-[13px] leading-[19px]">
        <colgroup>
          <col className="w-[32px]" />
          <col className="w-[106px]" />
          <col className="w-[111px]" />
          <col className="w-[199px]" />
          <col className="w-[677px]" />
          <col className="w-[74px]" />
          <col className="w-[214px]" />
          <col className="w-[74px]" />
          <col className="w-[73px]" />
          <col className="w-[74px]" />
          <col />
        </colgroup>
        <thead>
          <tr>
            <th aria-label="Vybrat vše" className="h-[23px] border-r border-b border-[#c4c4c4] bg-[#f1f1f1] p-0">
              <Svg w={17} h={17} className="mr-[2px] ml-auto">
                <path d="M17 0V17H0Z" fill="#dcdcdc" stroke="none" />
              </Svg>
            </th>
            {['A', 'B', 'C', 'D', 'E', 'F', 'G', 'H', 'I', 'J'].map((col) => (
              <th
                key={col}
                className={clsx(
                  "h-[23px] border-r px-0 pb-0 font-['Open_Sans',sans-serif] text-[14px] font-normal",
                  col === 'D'
                    ? 'border-b-2 border-r-[#c4c4c4] border-b-[#5b9a78] bg-[#e0e0e0] pt-[2px] text-[#217346]'
                    : 'border-b border-b-[#c4c4c4] bg-[#f1f1f1] pt-px text-[#5a5a5a]',
                  col === 'J' && 'border-r-transparent pr-[2px] text-right',
                  col !== 'D' && col !== 'J' && 'border-r-[#dedede]'
                )}
              >
                {col}
              </th>
            ))}
          </tr>
        </thead>
        <tbody>
          <tr>
            <RowNumber n={1} />
            <td className={clsx(CELL, 'pl-[3px]')}>Uživatelské jméno</td>
            <td className={clsx(CELL, 'text-[12px]')}>Typ uživatele</td>
            <td className={clsx(CELL, 'pl-[4px]')}>Email uživatele</td>
            <td className={clsx(CELL, 'pl-[4px] text-[12px]')}>Práva</td>
            <td className={clsx(CELL, 'pl-[3px]')}>Stav</td>
            <td className={clsx(CELL, 'pl-[3px]')}>Datum</td>
            <td className={CELL} />
            <td className={CELL} />
            <td className={CELL} />
            <td className={CELL} />
          </tr>
          {ROWS.map((row, i) => (
            <tr key={i}>
              <RowNumber n={i + 2} />
              <td className={clsx(CELL, i < 14 ? 'pl-[6px]' : 'pl-[3px]')}>{row.name}</td>
              <td className={CELL}>
                <div className="flex w-[71px] justify-center">{row.type}</div>
              </td>
              <td className={clsx(CELL, "pl-[4px] font-['Roboto',sans-serif] text-[15px] text-[#111]")}>{row.email}</td>
              <td className={clsx(CELL, "pl-[4px] font-['Inter',sans-serif] text-[14px] text-[#111]")}>
                {row.rights ? RIGHTS : ''}
              </td>
              <td className={CELL}>
                <div className="flex w-[52px] justify-center">{row.status}</div>
              </td>
              <td className={clsx(CELL, "pr-[2px] text-right font-['Roboto',sans-serif] text-[15px] text-[#111]")}>{row.date}</td>
              <td className={CELL} />
              <td className={CELL} />
              <td className={CELL} />
              <td className={CELL} />
            </tr>
          ))}
          {Array.from({ length: 13 }, (_, i) => (
            <tr key={i}>
              <RowNumber n={i + 19} />
              {Array.from({ length: 10 }, (_, c) => (
                <td key={c} className={CELL} />
              ))}
            </tr>
          ))}
        </tbody>
      </table>
    </div>
    <div className="flex w-[20px] shrink-0 flex-col items-center rounded-t-lg bg-[#f5f5f5] pt-[5px] pb-[3px] pl-[4px]">
      <Svg w={10} h={8}>
        <path d="M5 0.5 9.5 7H0.5Z" fill="#5f5f5f" stroke="none" />
      </Svg>
      <div className="mt-[4px] mb-[26px] w-[9px] flex-1 rounded-full bg-[#6b6b6b]" />
      <Svg w={10} h={8}>
        <path d="M5 7.5 9.5 1H0.5Z" fill="#5f5f5f" stroke="none" />
      </Svg>
    </div>
  </div>
);

const SheetTabs = () => (
  <div className="flex h-[32px] shrink-0 items-center bg-[#ece7e7]">
    <div className="flex w-[110px] items-center gap-[26px] pl-[22px]">
      <button aria-label="Předchozí list">
        <Svg w={7} h={11}><path d="M6 1 1.2 5.5 6 10" stroke="#8a8a8a" /></Svg>
      </button>
      <button aria-label="Další list">
        <Svg w={7} h={11}><path d="M1 1 5.8 5.5 1 10" stroke="#8a8a8a" /></Svg>
      </button>
    </div>
    <button className="h-[28px] self-start rounded-b-md bg-white px-[9px] font-['Open_Sans',sans-serif] text-[13px] font-semibold text-[#2b2b2b]">
      <span className="block border-b-2 border-[#107c41] leading-[22px]">DocumentTrackingReport</span>
    </button>
    <span className="ml-[4px] h-[20px] w-px bg-[#d2cccc]" />
    <button aria-label="Nový list" className="ml-[42px]">
      <Svg w={12} h={12}><path d="M6 0.5V11.5M0.5 6H11.5" /></Svg>
    </button>
    <div className="ml-auto flex items-center pr-[16px]">
      <Svg w={20} h={12}>
        <g fill="#444" stroke="none">
          <rect x="3" y="1" width="2" height="2" />
          <rect x="3" y="5" width="2" height="2" />
          <rect x="3" y="9" width="2" height="2" />
        </g>
      </Svg>
      <div className="flex h-[18px] w-[641px] items-center rounded-full bg-[#f5f5f5] px-[5px]">
        <Svg w={8} h={10}><path d="M0.5 5 7 0.5V9.5Z" fill="#5f5f5f" stroke="none" /></Svg>
        <div className="mr-[29px] ml-[4px] h-[9px] flex-1 rounded-full bg-[#6b6b6b]" />
        <Svg w={8} h={10}><path d="M7.5 5 1 0.5V9.5Z" fill="#5f5f5f" stroke="none" /></Svg>
      </div>
    </div>
  </div>
);

const StatusBar = () => (
  <footer className="flex h-[30px] shrink-0 items-center bg-[#f4f4f4] pr-[23px] pl-[16px]">
    <span className="pt-[4px] text-[14px]">Ready t, Accessibility: Good to go</span>
    <button className="mr-[5px] ml-auto flex items-center gap-[3px] pt-[2px] text-[10px]">
      <Svg w={15} h={14}>
        <path d="M7 10H1V1.5H13.5V6M3 12.5H7" />
        <circle cx="11" cy="10" r="2.8" strokeWidth="2" strokeDasharray="1.5 0.7" />
        <circle cx="11" cy="10" r="1.5" />
      </Svg>
      Nastavení zobrazení
    </button>
    <button aria-label="Normální" className="flex h-[30px] w-[41px] items-center justify-center bg-[#dedede]">
      <Svg w={13} h={13}>
        <path d="M0.7 0.7H12.3V12.3H0.7ZM0.7 4.6H12.3M0.7 8.4H12.3M4.6 0.7V12.3M8.4 0.7V12.3" />
      </Svg>
    </button>
    <button aria-label="Rozložení stránky" className="flex w-[41px] justify-center">
      <Svg w={14} h={13}>
        <path d="M0.7 0.7H13.3V12.3H0.7ZM3.5 2.5H10.5V10.5H3.5ZM5 4.5H9M5 6.5H9M5 8.5H9" />
      </Svg>
    </button>
    <button aria-label="Zobrazit konce stránek" className="flex w-[42px] justify-center">
      <Svg w={14} h={13}>
        <path d="M0.7 0.7H13.3V12.3H0.7ZM0.7 7H9V0.7M5 0.7V7" />
      </Svg>
    </button>
    <button aria-label="Oddálit" className="ml-[5px]">
      <Svg w={8} h={8}><path d="M0 4H8" strokeWidth="1" /></Svg>
    </button>
    <input
      aria-label="Lupa"
      type="range"
      min={0}
      max={100}
      defaultValue={50}
      className="mx-[5px] h-[12px] w-[100px] appearance-none bg-transparent [&::-webkit-slider-runnable-track]:h-[1px] [&::-webkit-slider-runnable-track]:bg-[#5a5a5a] [&::-webkit-slider-thumb]:-mt-[5px] [&::-webkit-slider-thumb]:h-[11px] [&::-webkit-slider-thumb]:w-[5px] [&::-webkit-slider-thumb]:appearance-none [&::-webkit-slider-thumb]:bg-[#555]"
    />
    <button aria-label="Přiblížit">
      <Svg w={8} h={8}><path d="M0 4H8M4 0V8" strokeWidth="1" /></Svg>
    </button>
    <span className="ml-[19px] pt-[2px] font-['Open_Sans',sans-serif] text-[10px] text-[#444]">100%</span>
  </footer>
);

export default function App() {
  return (
    <div className="flex h-screen flex-col overflow-hidden border-t-2 border-white bg-[#eaeaed] font-['Liberation_Sans',Arial,sans-serif] text-black">
      <TitleBar />
      <TabRow />
      <Ribbon />
      <FormulaBar />
      <Sheet />
      <SheetTabs />
      <StatusBar />
    </div>
  );
}
